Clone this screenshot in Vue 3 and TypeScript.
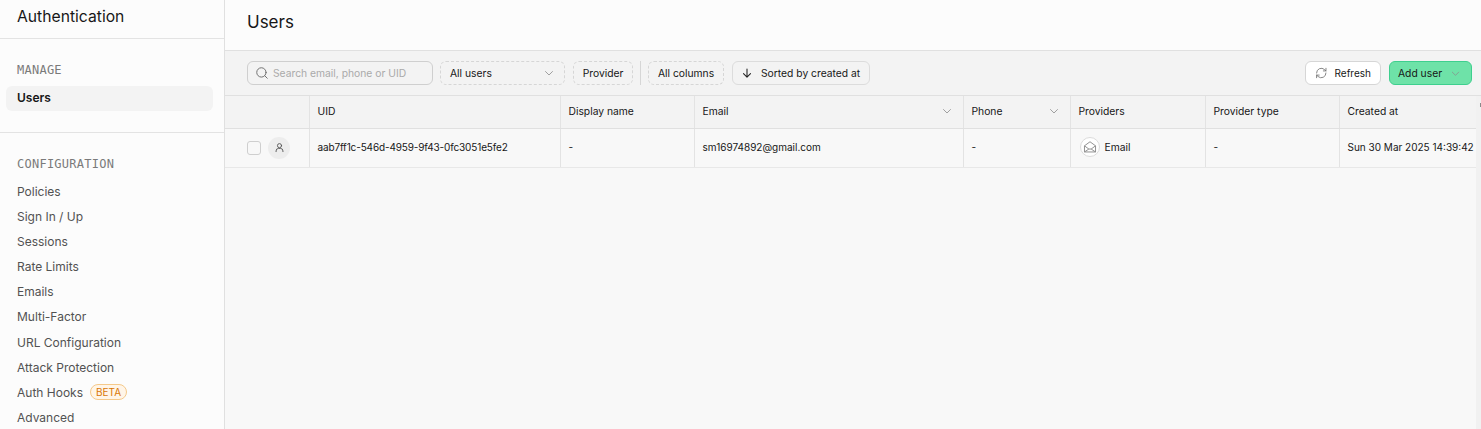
<script setup lang="ts">
const config: string[] = ['Policies','Sign In / Up','Sessions','Rate Limits','Emails','Multi-Factor','URL Configuration','Attack Protection']
const heads = [
  { t: '', w: 85, c: false },
  { t: 'UID', w: 251, c: false },
  { t: 'Display name', w: 134, c: false },
  { t: 'Email', w: 269, c: true },
  { t: 'Phone', w: 107, c: true },
  { t: 'Providers', w: 135, c: false },
  { t: 'Provider type', w: 134, c: false },
  { t: 'Created at', w: 170, c: false },
]
</script>

<template>
  <div class="page">
    <aside class="side">
      <div class="side-title">Authentication</div>
      <section class="group manage">
        <div class="label">MANAGE</div>
        <div class="item active">Users</div>
      </section>
      <section class="group conf">
        <div class="label">CONFIGURATION</div>
        <div v-for="c in config" :key="c" class="link">{{ c }}</div>
        <div class="link">Auth Hooks <span class="beta">BETA</span></div>
        <div class="link">Advanced</div>
      </section>
    </aside>
    <main class="main">
      <header class="head">Users</header>
      <div class="toolbar">
        <div class="search">
          <svg width="14" height="14" viewBox="0 0 24 24" fill="none" stroke="#707070" stroke-width="1.7" stroke-linecap="round"><circle cx="11" cy="11" r="8"/><path d="m21 21-4.3-4.3"/></svg>
          <span>Search email, phone or UID</span>
        </div>
        <div class="dash users"><span>All users</span><svg class="chev" width="12" height="12" viewBox="0 0 24 24"><path d="m5 9 7 7 7-7"/></svg></div>
        <div class="dash provider">Provider</div>
        <div class="sep"></div>
        <div class="dash columns">All columns</div>
        <div class="solid">
          <svg width="14" height="14" viewBox="0 0 24 24" fill="none" stroke="#222" stroke-width="1.8" stroke-linecap="round" stroke-linejoin="round"><path d="M12 5v14M6 13l6 6 6-6"/></svg>
          Sorted by created at
        </div>
        <div class="spacer"></div>
        <div class="refresh">
          <svg width="14" height="14" viewBox="0 0 24 24" fill="none" stroke="#707070" stroke-width="1.6" stroke-linecap="round" stroke-linejoin="round"><path d="M3 12a9 9 0 0 1 15-6.7L21 8"/><path d="M21 3v5h-5"/><path d="M21 12a9 9 0 0 1-15 6.7L3 16"/><path d="M8 16H3v5"/></svg>
          Refresh
        </div>
        <div class="add">Add user<svg class="chev" width="11" height="11" viewBox="0 0 24 24"><path d="m5 9 7 7 7-7"/></svg></div>
      </div>
      <div class="content">
        <div class="table-wrap">
          <div class="table">
            <div class="row hrow">
              <div v-for="h in heads" :key="h.t" class="cell" :style="{ width: h.w + 'px' }">
                <span>{{ h.t }}</span>
                <svg v-if="h.c" class="chev" width="12" height="12" viewBox="0 0 24 24"><path d="m5 9 7 7 7-7"/></svg>
              </div>
            </div>
            <div class="row brow">
              <div class="cell select" :style="{ width: heads[0].w + 'px' }">
                <span class="check"></span>
                <span class="avatar">
                  <svg width="11" height="11" viewBox="0 0 24 24" fill="none" stroke="#555" stroke-width="2" stroke-linecap="round"><circle cx="12" cy="8" r="4.500"/><path d="M4.500 21v-1.500A5.500 5.500 0 0 1 10 14h4a5.500 5.500 0 0 1 5.500 5.500V21"/></svg>
                </span>
              </div>
              <div class="cell uid" :style="{ width: heads[1].w + 'px' }">aab7ff1c-546d-4959-9f43-0fc3051e5fe2</div>
              <div class="cell" :style="{ width: heads[2].w + 'px' }">-</div>
              <div class="cell" :style="{ width: heads[3].w + 'px' }">sm16974892@gmail.com</div>
              <div class="cell" :style="{ width: heads[4].w + 'px' }">-</div>
              <div class="cell prov" :style="{ width: heads[5].w + 'px' }">
                <span class="mail">
                  <svg width="14" height="14" viewBox="0 0 24 24" fill="none" stroke="#8a8a8a" stroke-width="1.6" stroke-linejoin="round"><path d="M2.500 10 12 3l9.500 7v10.500h-19z"/><path d="m2.500 10 7.500 5.500h4l7.500-5.500M2.500 20.500l7.500-5M21.500 20.500l-7.500-5"/></svg>
                </span>
                <span class="prov-name">Email</span>
              </div>
              <div class="cell" :style="{ width: heads[6].w + 'px' }">-</div>
              <div class="cell" :style="{ width: heads[7].w + 'px' }">Sun 30 Mar 2025 14:39:42</div>
            </div>
          </div>
        </div>
        <div class="scroll"><span class="thumb"></span></div>
      </div>
    </main>
  </div>
</template>

<style>
html, body { margin: 0; overflow: hidden; }
</style>

<style scoped>
.page {
  display: flex; width: 1481px; height: 429px; overflow: hidden;
  font-family: "Inter", "Liberation Sans", sans-serif; color: #171717; background: #f8f8f8;
}
.side { width: 225px; box-sizing: border-box; flex: none; background: #fcfcfc; border-right: 1px solid #e0e0e0; }
.side-title { height: 39px; box-sizing: border-box; padding: 0 17px; font-size: 15.7px; line-height: 33px; border-bottom: 1px solid #e3e3e3; }
.group { padding: 0 11px 0 17px; }
.manage { height: 94px; border-bottom: 1px solid #e3e3e3; box-sizing: border-box; padding-top: 24px; }
.conf { padding-top: 24px; }
.label { font: 12px/14px "DejaVu Sans Mono", "Liberation Mono", monospace; color: #7a7a7a; letter-spacing: 0.25px; }
.manage .label { margin-bottom: 9px; }
.conf .label { margin-bottom: 8px; }
.item { margin-left: -11px; height: 25px; line-height: 24px; padding-left: 11px; background: #f3f3f3; border-radius: 6px; font-size: 12px; font-weight: 600; }
.link { height: 25.1px; line-height: 25.1px; font-size: 12px; color: #525252; display: flex; align-items: center; }
.beta { margin-left: 7px; height: 14px; line-height: 14px; padding: 0 5px; font-size: 10px; color: #d97706; background: #fff5e8; border: 1px solid #f5c98a; border-radius: 8px; }
.main { flex: 1; min-width: 0; display: flex; flex-direction: column; }
.head { height: 51px; flex: none; box-sizing: border-box; padding: 0 22px; line-height: 44px; font-size: 17px; background: #fcfcfc; border-bottom: 1px solid #e0e0e0; }
.toolbar { height: 45px; flex: none; box-sizing: border-box; display: flex; align-items: center; gap: 7px; padding: 0 9px 0 22px; background: #f3f3f3; border-bottom: 1px solid #e0e0e0; font-size: 10.3px; }
.toolbar > div { height: 24px; box-sizing: border-box; border-radius: 6px; display: flex; align-items: center; white-space: nowrap; }
.search { width: 186px; border: 1px solid #cfcfcf; padding-left: 7px; gap: 4px; color: #aaa; }
.dash { border: 1px dashed #d6d6d6; padding: 0 9px; justify-content: center; }
.users { width: 125px; justify-content: space-between; margin-right: 1px; }
.provider { width: 60px; }
.columns { width: 76px; margin-right: 1px; }
.sep { width: 1px; background: #d6d6d6; border-radius: 0 !important; }
.solid { border: 1px solid #dcdcdc; padding: 0 7px; gap: 7px; width: 138px; }
.spacer { flex: 1; }
.refresh { border: 1px solid #d6d6d6; background: #fff; padding: 0 9px; gap: 7px; width: 76px; margin-right: 1px; font-size: 10px; }
.add { background: #6ee2a8; border: 1px solid #3ecf8e; width: 83px; padding: 0 8px; gap: 8px; }
.chev { fill: none; stroke: #8a8a8a; stroke-width: 1.6; stroke-linecap: round; stroke-linejoin: round; flex: none; }
.content { display: flex; flex: 1; min-height: 0; }
.table-wrap { width: 1251px; flex: none; overflow: hidden; }
.scroll { flex: 1; background: #f1f1f1; position: relative; }
.thumb { position: absolute; right: 0; top: 7px; width: 1px; height: 4px; background: #8a8a8a; }
.table { width: 1285px; }
.row { display: flex; }
.hrow { height: 33px; background: #f3f3f3; border-bottom: 1px solid #e0e0e0; box-sizing: border-box; }
.hrow .cell { font-size: 10.3px; }
.brow { height: 39px; box-sizing: border-box; background: #f8f8f8; border-bottom: 1px solid #e8e8e8; }
.cell { flex: none; box-sizing: border-box; padding: 0 10px 2px 7.5px; display: flex; align-items: center; justify-content: space-between; font-size: 10px; white-space: nowrap; border-right: 1px solid #e3e3e3; }
.uid { letter-spacing: -0.14px; }
.select { justify-content: flex-start; gap: 7px; padding: 0 0 1px 22px; }
.check { width: 14px; height: 14px; box-sizing: border-box; border: 1px solid #cfcfcf; border-radius: 3px; }
.avatar { width: 22px; height: 22px; border-radius: 50%; background: #ededed; display: flex; align-items: center; justify-content: center; }
.prov { justify-content: flex-start; gap: 5px; padding-left: 8.5px; }
.prov-name { font-size: 10.3px; }
.mail { width: 20px; height: 20px; box-sizing: border-box; border: 1px solid #dcdcdc; background: #fff; border-radius: 50%; display: flex; align-items: center; justify-content: center; }
</style>
